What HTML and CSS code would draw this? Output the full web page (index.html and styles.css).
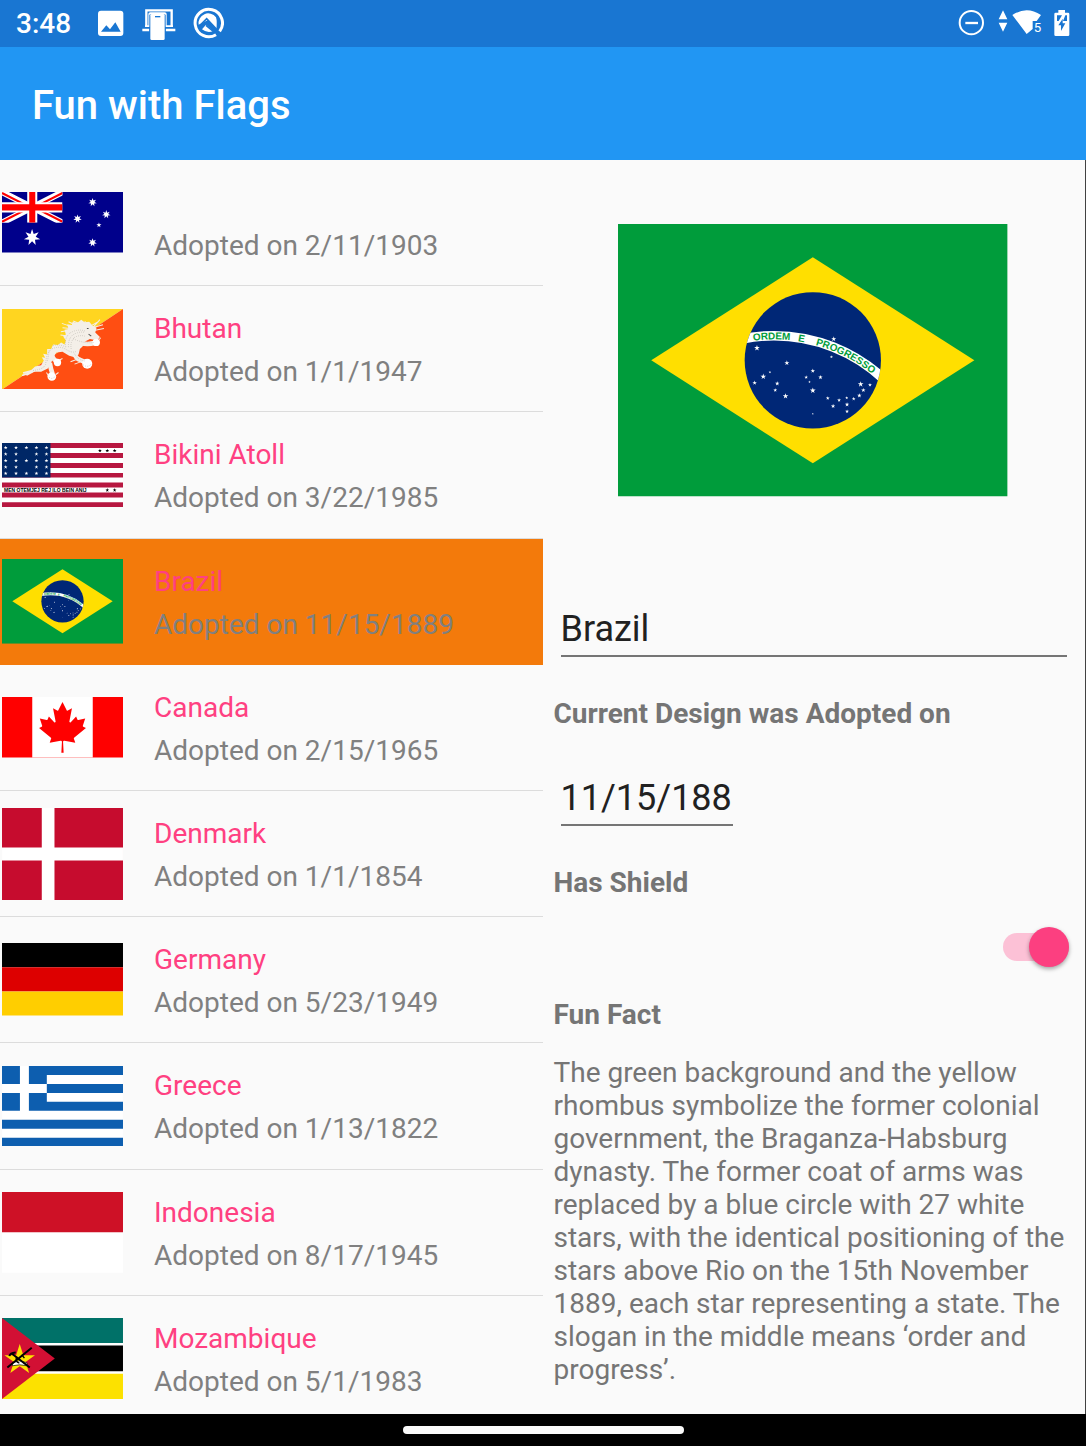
FILE: index.html
```html
<!DOCTYPE html>
<html lang="en">
<head>
<meta charset="utf-8">
<meta name="viewport" content="width=device-width, initial-scale=1">
<title>Fun with Flags</title>
<link rel="stylesheet" href="styles.css">
</head>
<body>
<svg class="defs" aria-hidden="true">
  <defs>
    <path id="star5" d="M0-1 .225-.309 .951-.309 .363.118 .588.809 0 .382-.588.809-.363.118-.951-.309-.225-.309z"/>
    <path id="star7" d="M0-1 .193-.4 .782-.623 .433-.099 .975.223 .347.277 .434.901 0 .444-.434.901-.347.277-.975.223-.433-.099-.782-.623-.193-.4z"/>
    <path id="motto" d="M18 847A473 473 0 0 1 964 847"/>
    <clipPath id="globe"><circle cx="608" cy="437" r="205"/></clipPath>
    <symbol id="brazil" viewBox="22 27 1172 820">
      <path fill="#009c3b" d="M22 27h1172v820H22z"/>
      <path fill="#ffdf00" d="M122 437 608 127l486 310-486 310z"/>
      <circle cx="608" cy="437" r="205" fill="#002776"/>
      <circle cx="491" cy="847" r="484" fill="none" stroke="#fff" stroke-width="29" clip-path="url(#globe)"/>
      <g class="motto">
        <text><textPath href="#motto" startOffset="736" text-anchor="middle">ORDEM</textPath></text>
        <text><textPath href="#motto" startOffset="825" text-anchor="middle">E</textPath></text>
        <text><textPath href="#motto" startOffset="966" text-anchor="middle">PROGRESSO</textPath></text>
      </g>
      <g fill="#fff">
        <use href="#star5" transform="translate(671 373) scale(8)"/>
        <use href="#star5" transform="translate(440 400) scale(9)"/>
        <use href="#star5" transform="translate(664 427) scale(5)"/>
        <use href="#star5" transform="translate(530 445) scale(8)"/>
        <use href="#star5" transform="translate(608 469) scale(7)"/>
        <use href="#star5" transform="translate(459 486) scale(9)"/>
        <use href="#star5" transform="translate(479 473) scale(4)"/>
        <use href="#star5" transform="translate(433 505) scale(7)"/>
        <use href="#star5" transform="translate(501 507) scale(7)"/>
        <use href="#star5" transform="translate(495 527) scale(6)"/>
        <use href="#star5" transform="translate(526 545) scale(9)"/>
        <use href="#star5" transform="translate(588 488) scale(6)"/>
        <use href="#star5" transform="translate(631 488) scale(7)"/>
        <use href="#star5" transform="translate(598 502) scale(4)"/>
        <use href="#star5" transform="translate(608 528) scale(9)"/>
        <use href="#star5" transform="translate(653 551) scale(6)"/>
        <use href="#star5" transform="translate(669 575) scale(7)"/>
        <use href="#star5" transform="translate(687 557) scale(6)"/>
        <use href="#star5" transform="translate(710 550) scale(5)"/>
        <use href="#star5" transform="translate(731 553) scale(6)"/>
        <use href="#star5" transform="translate(748 543) scale(7)"/>
        <use href="#star5" transform="translate(760 527) scale(7)"/>
        <use href="#star5" transform="translate(752 509) scale(9)"/>
        <use href="#star5" transform="translate(780 511) scale(6)"/>
        <use href="#star5" transform="translate(711 570) scale(7)"/>
        <use href="#star5" transform="translate(711 591) scale(6)"/>
        <use href="#star5" transform="translate(608 598) scale(3)"/>
      </g>
    </symbol>
  </defs>
</svg>

<div class="screen">
  <div class="status">
    <div class="status-left">
      <time>3:48</time>
      <svg width="30" height="47" viewBox="288 0 90 141" aria-hidden="true">
        <rect x="294" y="32" width="76" height="76" rx="9" fill="#fff"/>
        <path fill="#1976d2" d="M303 95 319 76l11 12 16-21 16 28z"/>
      </svg>
      <svg width="34" height="47" viewBox="428 0 102 141" aria-hidden="true">
        <path fill="none" stroke="#fff" stroke-width="7" d="M441 80V31h76v49M429 90h21M499 90h29"/>
        <path fill="#fff" d="M498 76h23v5h-23zM437 76h13v5h-13z"/>
        <path fill="none" stroke="#fff" stroke-width="6" d="M450 80V42q0-2 3-2h43q3 0 3 2v38"/>
        <path fill="#1976d2" d="M450 44h49v78h-49z"/>
        <rect x="453" y="42" width="43" height="78" rx="4" fill="#fff"/>
        <path stroke="#1976d2" stroke-width="4" d="M467 50h16"/>
      </svg>
      <svg width="32" height="47" viewBox="578 0 96 141" aria-hidden="true">
        <path fill="none" stroke="#fff" stroke-width="9" d="M650 104A41 41 0 1 1 661 94"/>
        <path fill="#fff" d="M598 74a29 29 0 0 1 52-22q4 12 1 36L626 60zM608 88l12-14 22 19q-18 8-34-5z"/>
        <path fill="none" stroke="#1976d2" stroke-width="5" d="M600 78 622 56l32 34M620 76l22 18"/>
      </svg>
    </div>
    <div class="status-right">
      <svg class="dnd" width="28" height="47" viewBox="84 0 84 141" aria-hidden="true">
        <circle cx="124" cy="68" r="35" fill="none" stroke="#fff" stroke-width="6"/>
        <path stroke="#fff" stroke-width="7" d="M106 69h38"/>
      </svg>
      <svg width="46" height="47" viewBox="204 0 138 141" aria-hidden="true">
        <path fill="#fff" d="m219 31 13 27h-26zM206 68h26l-13 27zM247 45q43-28 86 0l-13 18h-12v24l-18 15z"/>
        <text class="signal" x="311" y="95">5</text>
      </svg>
      <svg width="18" height="47" viewBox="368 0 54 141" aria-hidden="true">
        <path fill="#fff" d="M384 30h20v8h9q4 0 4 4v62q0 4-4 4h-37q-4 0-4-4V42q0-4 4-4h8z"/>
        <path fill="#1976d2" d="M380 46h15l-10 17h-5zM405 46h5v17h-12zM397 56v14h8l-13 23V76h-8z"/>
      </svg>
    </div>
  </div>

  <header class="appbar"><h1>Fun with Flags</h1></header>

  <main class="panes">
    <nav class="list-pane" aria-label="Flags">
      <ul class="list">
        <li><a class="row" href="#">
          <svg class="flag" viewBox="7 36 362 181" aria-hidden="true">
            <path fill="#00008b" d="M7 36h362v181H7z"/>
            <svg x="7" y="36" width="181" height="92" viewBox="0 0 60 30" preserveAspectRatio="none">
              <path stroke="#fff" stroke-width="6" d="m0 0 60 30M60 0 0 30"/>
              <path stroke="#f00" stroke-width="2" d="m0 1 30 15M60 1 30 16M30 14 0 29M30 14l30 15"/>
              <path stroke="#fff" stroke-width="10" d="M30 0v30M0 15h60"/>
              <path stroke="#f00" stroke-width="6" d="M30 0v30M0 15h60"/>
            </svg>
            <g fill="#fff">
              <use href="#star7" transform="translate(97 172) scale(25)"/>
              <use href="#star7" transform="translate(278 67) scale(13)"/>
              <use href="#star7" transform="translate(233 116) scale(13)"/>
              <use href="#star7" transform="translate(319 103) scale(13)"/>
              <use href="#star7" transform="translate(278 187) scale(13)"/>
              <use href="#star5" transform="translate(297 135) scale(8)"/>
            </g>
          </svg>
          <span class="text"><span class="name"></span><span class="date">Adopted on 2/11/1903</span></span>
        </a></li>
        <li><a class="row" href="#">
          <svg class="flag" viewBox="7 386 362 241" aria-hidden="true">
            <path fill="#ffd520" d="M7 386h362L7 627z"/>
            <path fill="#ff4e12" d="M369 386v241H7z"/>
            <g fill="none" stroke="#f4efe8" stroke-linejoin="round">
              <path stroke-width="5" stroke-linecap="round" d="M69 584l28-9M72 577l26-7M82 583l22-12"/>
              <path fill="#f4efe8" stroke="none" d="M84 578l22-20 18-4 8-14-6-10 10 2-6-12 12 2 0-16 12 0 6-14 14 2 10-8 10 6 4-12-8-12 8-6-4-14 12-2-4-14 14 2 2-10 14 4 12-10 10 8 14-2 10 12 12 6-4 14 14 14-8 10-22-4-16 8-6 14-8 8-4 16-12 8-16-4-20-12-18 2-10 14-6 18-10 16-20 10-22 0z"/>
              <path stroke-width="14" d="M222 516q6 18 18 22l18 8M222 480q30 16 62 8M150 548q2 14 8 32M156 520q2 16 14 22"/>
              <path stroke-width="3" d="M212 438l-26-9M212 444l-24-2M226 434l-20-10M240 430l-20-8M254 432l2-10M270 438l25-14M278 442l31-9M280 440l20-22M282 450l30-6M272 462l22 4M205 450l-22 4M198 466l-16-2M228 538l-16 6M240 545l-16 6M176 540l12-6M146 586l-6-10M168 582l8-6M298 478l4-6"/>
            </g>
            <g fill="#fff"><circle cx="262" cy="550" r="15"/><circle cx="156" cy="588" r="13"/><circle cx="173" cy="546" r="11"/><circle cx="289" cy="486" r="11"/></g>
            <path fill="none" stroke="#aaa79f" stroke-width="2" stroke-dasharray="2 4" d="M100 570q34-4 38-20 0-32 19-45 22-10 42 2 18 12 30 6M198 500q-6-26 12-42 24-14 46-6M206 500q-2-22 12-36 20-12 36-8M214 505q-4-20 10-34 14-8 30-4M160 495q20-4 36 4M148 510q-2 20-6 34M220 475q34 16 64 11M224 520q10 20 34 22M250 553q12 10 24-2M148 590q8 8 18-2"/>
            <path stroke="#555" stroke-width="3" d="M261 444h5M266 461l8 6"/>
          </svg>
          <span class="text"><span class="name">Bhutan</span><span class="date">Adopted on 1/1/1947</span></span>
        </a></li>
        <li><a class="row" href="#">
          <svg class="flag" viewBox="7 38 362 192" aria-hidden="true">
            <path fill="#fff" d="M7 38h362v192H7z"/>
            <path fill="#b71740" d="M7 38h362v15H7zM7 68h362v15H7zM7 98h362v15H7zM7 128h362v13H7zM7 156h362v15H7zM7 186h362v15H7zM7 215h362v15H7z"/>
            <path fill="#002766" d="M7 38h145v103H7z"/>
            <g fill="#fff">
              <g id="column">
                <use href="#star5" transform="translate(18 52) scale(6)"/>
                <use href="#star5" transform="translate(18 71) scale(6)"/>
                <use href="#star5" transform="translate(18 91) scale(6)"/>
                <use href="#star5" transform="translate(18 110) scale(6)"/>
                <use href="#star5" transform="translate(18 129) scale(6)"/>
              </g>
              <use href="#column" x="31"/><use href="#column" x="92"/><use href="#column" x="122"/>
              <use href="#star5" transform="translate(80 52) scale(6)"/>
              <use href="#star5" transform="translate(80 91) scale(6)"/>
              <use href="#star5" transform="translate(80 129) scale(6)"/>
            </g>
            <use href="#star5" transform="translate(300 61) scale(6)"/>
            <use href="#star5" transform="translate(322 61) scale(6)"/>
            <use href="#star5" transform="translate(344 61) scale(6)"/>
            <use href="#star5" transform="translate(322 179) scale(6)"/>
            <use href="#star5" transform="translate(344 179) scale(6)"/>
            <text class="oath" x="13" y="184">MEN OTEMJEJ REJ ILO BEIN ANIJ</text>
          </svg>
          <span class="text"><span class="name">Bikini Atoll</span><span class="date">Adopted on 3/22/1985</span></span>
        </a></li>
        <li><a class="row selected" href="#" aria-current="true">
          <svg class="flag" viewBox="0 0 1172 820" aria-hidden="true"><use href="#brazil"/></svg>
          <span class="text"><span class="name">Brazil</span><span class="date">Adopted on 11/15/1889</span></span>
        </a></li>
        <li><a class="row" href="#">
          <svg class="flag" viewBox="0 0 9600 4800" aria-hidden="true">
            <path fill="#f00" d="M0 0h9600v4800H0z"/>
            <path fill="#fff" d="M2400 0h4800v4800H2400z"/>
            <path fill="#f00" d="m4890 4430-45-863a95 95 0 0 1 111-98l859 151-116-320a65 65 0 0 1 20-73l941-762-212-99a65 65 0 0 1-34-79l186-572-542 115a65 65 0 0 1-73-38l-105-247-423 454a65 65 0 0 1-111-57l204-1052-327 189a65 65 0 0 1-91-27l-332-652-332 652a65 65 0 0 1-91 27l-327-189 204 1052a65 65 0 0 1-111 57l-423-454-105 247a65 65 0 0 1-73 38l-542-115 186 572a65 65 0 0 1-34 79l-212 99 941 762a65 65 0 0 1 20 73l-116 320 859-151a95 95 0 0 1 111 98l-45 863z"/>
          </svg>
          <span class="text"><span class="name">Canada</span><span class="date">Adopted on 2/15/1965</span></span>
        </a></li>
        <li><a class="row" href="#">
          <svg class="flag" viewBox="7 368 362 275" aria-hidden="true">
            <path fill="#c60c2e" d="M7 368h362v275H7z"/>
            <path fill="#fff" d="M126 368h38v275h-38zM7 486h362v39H7z"/>
          </svg>
          <span class="text"><span class="name">Denmark</span><span class="date">Adopted on 1/1/1854</span></span>
        </a></li>
        <li><a class="row" href="#">
          <svg class="flag" viewBox="0 0 5 3" aria-hidden="true">
            <path d="M0 0h5v1H0z"/><path fill="#d00" d="M0 1h5v1H0z"/><path fill="#ffce00" d="M0 2h5v1H0z"/>
          </svg>
          <span class="text"><span class="name">Germany</span><span class="date">Adopted on 5/23/1949</span></span>
        </a></li>
        <li><a class="row" href="#">
          <svg class="flag" viewBox="0 0 27 18" aria-hidden="true">
            <path fill="#0d5eaf" d="M0 0h27v18H0z"/>
            <path stroke="#fff" stroke-width="2" d="M5 0v10M0 5h10M10 3h17M10 7h17M0 11h27M0 15h27"/>
          </svg>
          <span class="text"><span class="name">Greece</span><span class="date">Adopted on 1/13/1822</span></span>
        </a></li>
        <li><a class="row" href="#">
          <svg class="flag" viewBox="0 0 3 2" aria-hidden="true">
            <path fill="#fff" d="M0 0h3v2H0z"/><path fill="#ce1126" d="M0 0h3v1H0z"/>
          </svg>
          <span class="text"><span class="name">Indonesia</span><span class="date">Adopted on 8/17/1945</span></span>
        </a></li>
        <li><a class="row" href="#">
          <svg class="flag" viewBox="7 414 362 242" aria-hidden="true">
            <path fill="#fff" d="M7 414h362v242H7z"/>
            <path fill="#007168" d="M7 414h362v75H7z"/>
            <path d="M7 496h362v77H7z"/>
            <path fill="#fce100" d="M7 581h362v75H7z"/>
            <path fill="#d21034" d="m7 414 158 121L7 656z"/>
            <use href="#star5" fill="#fce100" transform="translate(60 540) scale(48)"/>
            <path fill="#fff" stroke="#000" stroke-width="2" d="m38 548 22-6 22 6v9l-22-3-22 3z"/>
            <path fill="none" stroke="#000" stroke-width="6" d="m23 562 73-59M29 528q2-10 19-11M36 520l54 42"/>
            <path fill="none" stroke="#000" stroke-width="4" d="M51 529q-6 16 8 20M66 524l8 10"/>
          </svg>
          <span class="text"><span class="name">Mozambique</span><span class="date">Adopted on 5/1/1983</span></span>
        </a></li>
      </ul>
    </nav>

    <section class="detail" aria-label="Flag details">
      <svg class="hero" viewBox="0 0 1172 820" role="img" aria-label="Brazil"><use href="#brazil"/></svg>
      <input class="entry" type="text" value="Brazil" aria-label="Brazil">
      <label class="label" for="adopted">Current Design was Adopted on</label>
      <input class="entry entry-date" id="adopted" type="text" value="11/15/188">
      <label class="label label-switch" for="shield">Has Shield</label>
      <input class="switch" id="shield" type="checkbox" role="switch" checked>
      <h2 class="label label-fact">Fun Fact</h2>
      <p class="fact">The green background and the yellow rhombus symbolize the former colonial government, the Braganza-Habsburg dynasty. The former coat of arms was replaced by a blue circle with 27 white stars, with the identical positioning of the stars above Rio on the 15th November 1889, each star representing a state. The slogan in the middle means ‘order and progress’.</p>
    </section>
  </main>

  <footer class="navbar"><span class="pill"></span></footer>
</div>
</body>
</html>
```
FILE: styles.css
```css
* {
  box-sizing: border-box;
}

body {
  margin: 0;
  background: #fafafa;
  color: #757575;
  font-family: Roboto, "Liberation Sans", sans-serif;
  font-size: 28px;
  line-height: 33px;
}

.defs {
  position: absolute;
  width: 0;
  height: 0;
}

.screen {
  display: flex;
  flex-direction: column;
  height: 100vh;
}

/* Status bar */
.status {
  display: flex;
  justify-content: space-between;
  height: 47px;
  padding: 0 15px 0 16px;
  background: #1976d2;
  color: #fff;
}

.status-left,
.status-right {
  display: flex;
  align-items: center;
}

.status-left {
  gap: 16px;
}

.status-left time {
  padding-right: 9px;
  font-weight: 500;
}

.status-right {
  gap: 9px;
}

.dnd {
  margin-right: 3px;
}

.signal {
  fill: #fff;
  font-size: 40px;
}

/* App bar */
.appbar {
  display: flex;
  align-items: center;
  height: 113px;
  padding: 4px 32px 0;
  background: #2196f3;
  color: #fff;
}

.appbar h1 {
  margin: 0;
  font-size: 40px;
  font-weight: 500;
  line-height: 48px;
}

/* Panes */
.panes {
  display: grid;
  grid-template-columns: 1fr 1fr;
  flex: 1;
  min-height: 0;
  border-right: 1px solid #424242;
}

.list-pane,
.detail {
  min-height: 0;
  overflow: hidden;
}

/* The last row runs under the gesture bar. */
.list {
  display: grid;
  grid-auto-rows: 1fr;
  height: calc(100% + 8px);
  margin: 0;
  padding: 0;
  list-style: none;
}

.row {
  display: flex;
  align-items: center;
  gap: 31px;
  height: 100%;
  padding-left: 2px;
  border-bottom: 1px solid #dcdcdc;
  color: #808080;
  text-decoration: none;
}

.selected {
  border-color: #f37a0b;
  background: #f37a0b;
}

.flag {
  flex: none;
  width: 121px;
}

.text {
  display: flex;
  flex-direction: column;
  gap: 10px;
  padding-top: 3px;
}

.name {
  min-height: 33px;
  color: #ff4081;
}

.motto {
  fill: #009c3b;
  font: bold 30px "Liberation Sans", sans-serif;
}

.oath {
  font: bold 15px "Liberation Sans", sans-serif;
}

/* Detail pane */
.detail {
  display: flex;
  flex-direction: column;
  align-items: flex-start;
  padding: 64px 12px 0 11px;
}

.detail > * {
  flex: none;
}

.hero {
  align-self: center;
  width: 75%;
  margin-bottom: 108px;
}

.entry {
  align-self: stretch;
  height: 52px;
  margin: 0 6px 40px 7px;
  padding: 0 0 2px;
  border: 0;
  border-bottom: 2px solid #757575;
  border-radius: 0;
  outline: 0;
  background: none;
  color: #212121;
  font: 36px Roboto, "Liberation Sans", sans-serif;
}

.entry-date {
  align-self: flex-start;
  width: 172px;
}

.label {
  margin: 0 0 44px;
  font-size: 28px;
  font-weight: 700;
  line-height: 33px;
}

.label-switch {
  margin-bottom: 34px;
}

.label-fact {
  margin-bottom: 25px;
}

.switch {
  appearance: none;
  align-self: flex-end;
  width: 66px;
  height: 28px;
  margin: 0 4px 37px 0;
  border-radius: 14px;
  background: #fcc1d6;
}

.switch::before {
  content: "";
  display: block;
  width: 40px;
  height: 40px;
  margin: -6px 0 0 auto;
  border-radius: 50%;
  background: #fc3f80;
  box-shadow: 0 2px 4px rgba(0, 0, 0, 0.35);
}

.fact {
  margin: 0;
}

/* Gesture bar */
.navbar {
  display: flex;
  align-items: center;
  justify-content: center;
  height: 32px;
  background: #000;
}

.pill {
  width: 281px;
  height: 8px;
  border-radius: 4px;
  background: #fafafa;
}
```
